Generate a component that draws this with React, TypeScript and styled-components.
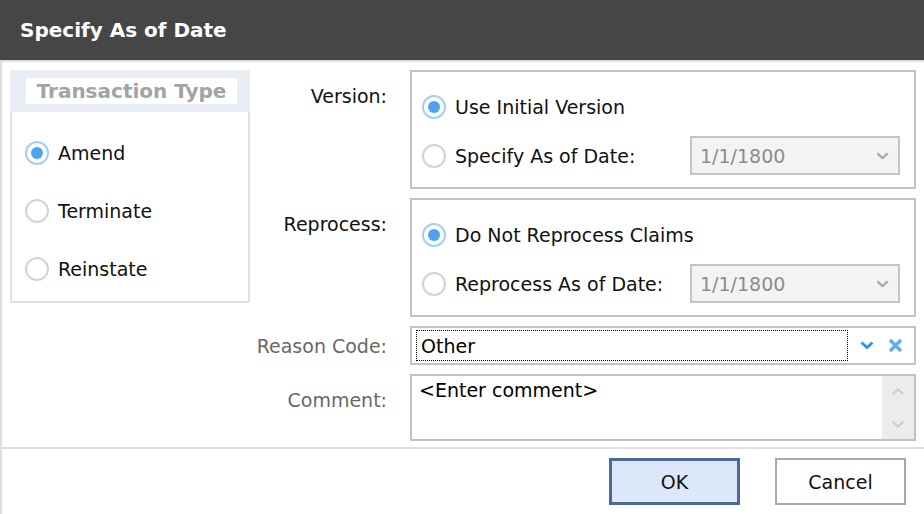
import React from "react";
import styled, { createGlobalStyle } from "styled-components";

const GlobalStyle = createGlobalStyle`
  html, body { margin: 0; padding: 0; background: #fff; }
  body { font-family: "DejaVu Sans", "Liberation Sans", sans-serif; }
  * { box-sizing: border-box; }
`;

const Dialog = styled.div`
  width: 924px;
  height: 514px;
  display: flex;
  flex-direction: column;
  background: #fff;
  overflow: hidden;
  font-size: 19px;
  color: #111;
`;

const TitleBar = styled.div`
  height: 60px;
  flex: none;
  background: #464646;
  color: #fff;
  font-weight: bold;
  font-size: 20px;
  display: flex;
  align-items: center;
  padding-left: 20px;
`;

const Body = styled.div`
  flex: 1;
  display: flex;
  flex-direction: column;
  border-left: 2px solid #dedede;
  border-top: 2px solid #dedede;
`;

const Main = styled.div`
  display: flex;
  align-items: flex-start;
  padding: 8px 0 0 8px;
`;

const GroupBox = styled.div`
  width: 240px;
  display: flex;
  flex-direction: column;
`;

const GroupHeader = styled.div`
  height: 42px;
  background: #e9eef5;
  padding: 8px 13px 8px 16px;
`;

const GroupLabel = styled.div`
  height: 26px;
  background: #fff;
  color: #a3a3a3;
  font-weight: bold;
  font-size: 20px;
  display: flex;
  align-items: center;
  justify-content: center;
`;

const GroupList = styled.div`
  height: 191px;
  border: 2px solid #e1e1e1;
  border-top: none;
  display: flex;
  flex-direction: column;
  gap: 19px;
  padding: 21px 0 0 13px;
`;

const RadioRow = styled.label`
  display: flex;
  align-items: center;
  gap: 9px;
  height: 39px;
  white-space: nowrap;
`;

const RadioCircle = styled.span<{ $checked?: boolean }>`
  width: 24px;
  height: 24px;
  flex: none;
  border-radius: 50%;
  border: 2px solid ${(p) => (p.$checked ? "#a5cdf4" : "#d3d3d3")};
  background: #fff;
  display: flex;
  align-items: center;
  justify-content: center;
  &::after {
    content: "";
    width: 12px;
    height: 12px;
    border-radius: 50%;
    background: ${(p) => (p.$checked ? "#4ea3f0" : "transparent")};
  }
`;

const Form = styled.div`
  display: grid;
  grid-template-columns: 137px 506px;
  column-gap: 23px;
  row-gap: 9px;
`;

const FieldLabel = styled.div<{ $muted?: boolean; $center?: boolean }>`
  text-align: right;
  color: ${(p) => (p.$muted ? "#686868" : "#111")};
  padding-top: ${(p) => (p.$center ? "0" : "15px")};
  align-self: ${(p) => (p.$center ? "center" : "start")};
  white-space: nowrap;
`;

const OptionBox = styled.div`
  border: 2px solid #c2c2c2;
  display: flex;
  flex-direction: column;
  gap: 10px;
  padding: 15px 14px 12px 10px;
`;

const OptionRow = styled.div`
  display: flex;
  align-items: center;
  justify-content: space-between;
  height: 39px;
`;

const DateCombo = styled.div`
  width: 210px;
  height: 39px;
  border: 2px solid #c4c4c4;
  background: #f3f3f3;
  color: #8c8c8c;
  display: flex;
  align-items: center;
  justify-content: space-between;
  padding: 0 9px 0 8px;
`;

const ReasonField = styled.div`
  height: 39px;
  border: 2px solid #c4c4c4;
  display: flex;
  align-items: center;
  padding: 2px 10px 2px 4px;
  gap: 10px;
`;

const FocusText = styled.div`
  flex: 1;
  height: 31px;
  border: 1px dotted #000;
  display: flex;
  align-items: center;
  padding-left: 4px;
  color: #000;
`;

const IconButton = styled.span`
  display: flex;
  align-items: center;
  justify-content: center;
  width: 18px;
`;

const CommentBox = styled.div`
  height: 67px;
  border: 2px solid #c2c2c2;
  display: flex;
`;

const CommentText = styled.div`
  flex: 1;
  padding: 3px 0 0 7px;
  color: #000;
`;

const ScrollTrack = styled.div`
  width: 32px;
  background: #ececec;
  display: flex;
  flex-direction: column;
  align-items: center;
  justify-content: space-between;
  padding: 11px 0 11px;
`;

const Separator = styled.div`
  height: 2px;
  background: #dedede;
  margin-top: 6px;
  margin-left: -2px;
`;

const Footer = styled.div`
  display: flex;
  justify-content: flex-end;
  gap: 35px;
  padding: 9px 18px 0 0;
`;

const Button = styled.button<{ $primary?: boolean }>`
  width: 131px;
  height: 47px;
  font-family: inherit;
  font-size: 19px;
  color: #111;
  background: ${(p) => (p.$primary ? "#dce8f9" : "#fff")};
  border: ${(p) => (p.$primary ? "3px solid #4b6a9b" : "2px solid #a8a8a8")};
  padding: 0;
`;

const Chevron = ({ color, size = 14, stroke = 3 }: { color: string; size?: number; stroke?: number }) => (
  <svg width={size} height={size * 0.6} viewBox="0 0 14 8.4" fill="none">
    <path d="M1.5 1.5 L7 6.5 L12.5 1.5" stroke={color} strokeWidth={stroke} />
  </svg>
);

const ChevronUp = ({ color }: { color: string }) => (
  <svg width={14} height={9} viewBox="0 0 14 9" fill="none">
    <path d="M2 7 L7 2.5 L12 7" stroke={color} strokeWidth={2} />
  </svg>
);

const Radio = ({ checked, children }: { checked?: boolean; children: React.ReactNode }) => (
  <RadioRow>
    <RadioCircle $checked={checked} />
    <span>{children}</span>
  </RadioRow>
);

export default function App() {
  return (
    <>
      <GlobalStyle />
      <Dialog>
        <TitleBar>Specify As of Date</TitleBar>
        <Body>
          <Main>
            <GroupBox>
              <GroupHeader>
                <GroupLabel>Transaction Type</GroupLabel>
              </GroupHeader>
              <GroupList>
                <Radio checked>Amend</Radio>
                <Radio>Terminate</Radio>
                <Radio>Reinstate</Radio>
              </GroupList>
            </GroupBox>
            <Form>
              <FieldLabel>Version:</FieldLabel>
              <OptionBox>
                <OptionRow>
                  <Radio checked>Use Initial Version</Radio>
                </OptionRow>
                <OptionRow>
                  <Radio>Specify As of Date:</Radio>
                  <DateCombo>
                    <span>1/1/1800</span>
                    <Chevron color="#a9a9a9" size={13} stroke={2.5} />
                  </DateCombo>
                </OptionRow>
              </OptionBox>

              <FieldLabel>Reprocess:</FieldLabel>
              <OptionBox>
                <OptionRow>
                  <Radio checked>Do Not Reprocess Claims</Radio>
                </OptionRow>
                <OptionRow>
                  <Radio>Reprocess As of Date:</Radio>
                  <DateCombo>
                    <span>1/1/1800</span>
                    <Chevron color="#a9a9a9" size={13} stroke={2.5} />
                  </DateCombo>
                </OptionRow>
              </OptionBox>

              <FieldLabel $muted $center>Reason Code:</FieldLabel>
              <ReasonField>
                <FocusText>Other</FocusText>
                <IconButton>
                  <Chevron color="#2f96ea" size={14} stroke={3} />
                </IconButton>
                <IconButton>
                  <svg width={15} height={15} viewBox="0 0 15 15">
                    <path d="M2 2 L13 13 M13 2 L2 13" stroke="#5eaef2" strokeWidth={3.4} />
                  </svg>
                </IconButton>
              </ReasonField>

              <FieldLabel $muted>Comment:</FieldLabel>
              <CommentBox>
                <CommentText>&lt;Enter comment&gt;</CommentText>
                <ScrollTrack>
                  <ChevronUp color="#cbcbcb" />
                  <Chevron color="#cbcbcb" size={14} stroke={2} />
                </ScrollTrack>
              </CommentBox>
            </Form>
          </Main>
          <Separator />
          <Footer>
            <Button $primary>OK</Button>
            <Button>Cancel</Button>
          </Footer>
        </Body>
      </Dialog>
    </>
  );
}
